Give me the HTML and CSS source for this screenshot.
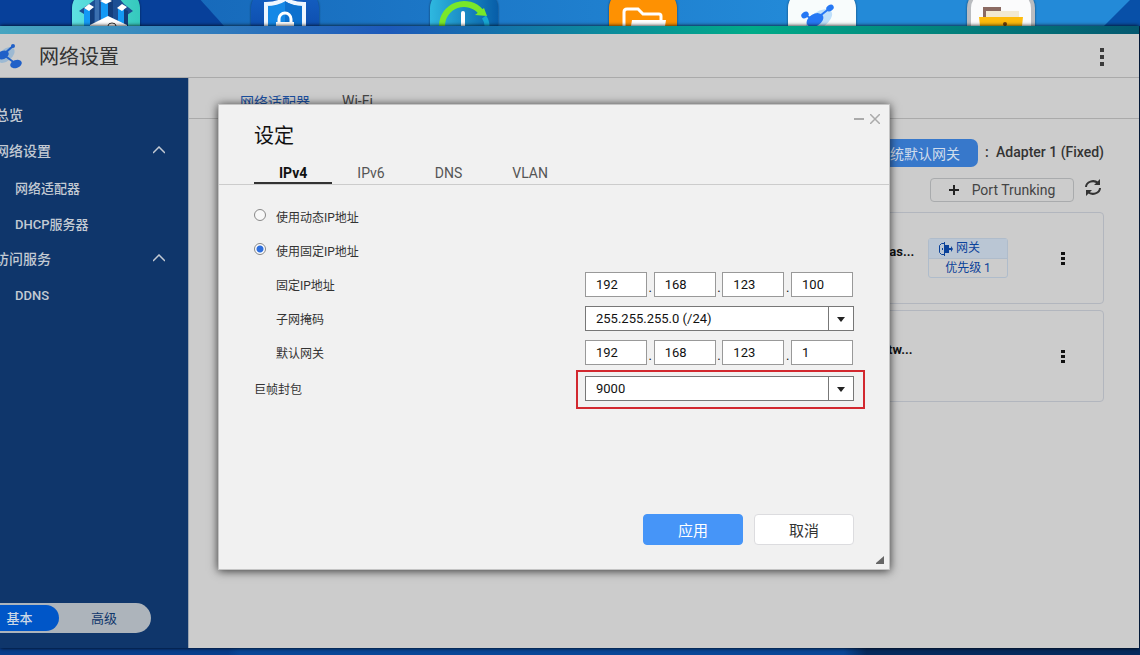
FILE: index.html
```html
<!DOCTYPE html>
<html lang="zh-CN">
<head>
    <meta charset="UTF-8">
    <meta name="viewport" content="width=device-width, initial-scale=1.0">
    <title>网络设置</title>
    <link rel="stylesheet" href="styles.css">
</head>
<body>

    <!-- 桌面图标 -->
    <div class="desktop-icons">
        <svg class="app-icon" viewBox="0 0 68 26">
            <defs>
                <linearGradient id="teal" x1="0" x2="1"><stop offset="0" stop-color="#5fe0e2"/><stop offset="1" stop-color="#35c9bd"/></linearGradient>
            </defs>
            <rect y="-9" width="68" height="68" rx="17" fill="url(#teal)"/>
            <path d="M7 11l10-7 8-6h22l5 6 9 7-6 4v11H12V14z" fill="#1c4f94"/>
            <path d="M12 9h6v17h-6zM29 2h7v18h-7zM46 9h6v17h-6z" fill="#1499f5"/>
            <path d="M18 9l4-2v19h-4zM36 2l5-2v22h-5zM52 9l4 2v15h-4z" fill="#123d7c"/>
            <path d="M23 0h4v22h-4z" fill="#3a6fb0"/>
            <path d="M12 8l5-4 5 3-5 4zM28 1l6-3 6 3-6 3zM45 8l5-4 5 3-5 4z" fill="#fff"/>
            <path d="M18 26v-1l18-9 19 9v1z" fill="#fff"/>
            <path d="M36 26a4 3 0 0 1 8 0" fill="none" stroke="#333" stroke-width="1"/>
        </svg>
        <svg class="app-icon" viewBox="0 0 68 26">
            <defs>
                <linearGradient id="navy" x2="0" y2="1"><stop offset="0" stop-color="#1560c4"/><stop offset="1" stop-color="#07409c"/></linearGradient>
            </defs>
            <rect y="-9" width="68" height="68" rx="17" fill="url(#navy)"/>
            <path d="M15 28V4q11 0 19-5 8 5 19 5v24z" fill="#1488e6" stroke="#eef6ff" stroke-width="4"/>
            <path d="M34 1v25h17V6q-10 0-17-5z" fill="#0c70ce"/>
            <path d="M28 24v-5a6 6 0 0 1 12 0v5" fill="none" stroke="#fff" stroke-width="3"/>
            <path d="M25 22h18v4H25z" fill="#fff"/>
        </svg>
        <svg class="app-icon" viewBox="0 0 68 26">
            <defs>
                <linearGradient id="clock"><stop offset="0" stop-color="#2eb8e0"/><stop offset="1" stop-color="#075da8"/></linearGradient>
            </defs>
            <rect y="-9" width="68" height="68" rx="17" fill="url(#clock)"/>
            <path d="M12 26a22 22 0 0 1 39-14" fill="none" stroke="#79e82a" stroke-width="6"/>
            <path d="M54 8l3 8-12-1z" fill="#79e82a"/>
            <path d="M54 17q3 4 3 9" fill="none" stroke="#17a7d2" stroke-width="5"/>
            <path d="M33 13v13" stroke="#fff" stroke-width="4" stroke-linecap="round"/>
        </svg>
        <svg class="app-icon" viewBox="0 0 68 26">
            <rect y="-9" width="68" height="68" rx="17" fill="#fe9102"/>
            <path d="M15 28V12q0-3 3-3h11l5 5h16q2 0 2 2v5" fill="none" stroke="#fff" stroke-width="3"/>
            <path d="M22 26l1-6h34l-1 6z" fill="#fff"/>
        </svg>
        <svg class="app-icon" viewBox="0 0 68 26">
            <rect y="-9" width="68" height="68" rx="17" fill="#f8fcfc"/>
            <ellipse cx="31" cy="20" rx="15" ry="8" fill="#bfe0fa" transform="rotate(-35 31 20)"/>
            <ellipse cx="27" cy="20" rx="9" ry="6" fill="#2678f4" transform="rotate(-30 27 20)"/>
            <path d="M28 19L42 8M26 20l-9-5" stroke="#2678f4" stroke-width="2"/>
            <ellipse cx="42" cy="8" rx="4" ry="3" fill="#2678f4" transform="rotate(-35 42 8)"/>
            <ellipse cx="17" cy="15" rx="4" ry="3" fill="#2678f4" transform="rotate(-35 17 15)"/>
        </svg>
        <svg class="app-icon" viewBox="0 0 68 26">
            <rect x="2" y="-9" width="64" height="68" rx="17" fill="#fbfbfc" stroke="#babcc0" stroke-width="4"/>
            <path d="M16 7h18v4H20v6h-4z" fill="#8b6a62"/>
            <path d="M19 11h33v7H19z" fill="#f2e9d2"/>
            <path d="M12 17h44l-1 9H13z" fill="#febb0c"/>
            <circle cx="38" cy="24" r="2" fill="#70400c"/>
        </svg>
    </div>

    <!-- 网络设置窗口 -->
    <div class="window">
        <header class="window-header">
            <svg class="logo" viewBox="0 0 24 28">
                <ellipse cx="6" cy="12" rx="10" ry="6" fill="#9db9d2" transform="rotate(-40 6 12)"/>
                <ellipse cx="3" cy="12" rx="6" ry="4" fill="#2060c8" transform="rotate(-25 3 12)"/>
                <path d="M4 11l9-8M4 12l12 9" stroke="#2060c8" stroke-width="2"/>
                <ellipse cx="13" cy="3" rx="2" ry="2" fill="#2060c8"/>
                <ellipse cx="16" cy="21" rx="6" ry="4" fill="#2060c8" transform="rotate(-20 16 21)"/>
            </svg>
            <h1>网络设置</h1>
            <button type="button" class="kebab kebab-large" aria-label="更多"><i></i><i></i><i></i></button>
        </header>

        <div class="window-body">
            <aside class="sidebar">
                <nav class="menu">
                    <a href="#" class="menu-item">总览</a>
                    <a href="#" class="menu-item">网络设置
                        <svg class="chevron" viewBox="0 0 12 8"><path d="M0 7l6-6 6 6"/></svg>
                    </a>
                    <a href="#" class="menu-item sub">网络适配器</a>
                    <a href="#" class="menu-item sub">DHCP服务器</a>
                    <a href="#" class="menu-item">访问服务
                        <svg class="chevron" viewBox="0 0 12 8"><path d="M0 7l6-6 6 6"/></svg>
                    </a>
                    <a href="#" class="menu-item sub">DDNS</a>
                </nav>
                <div class="mode-switch">
                    <button type="button" class="active">基本</button>
                    <button type="button">高级</button>
                </div>
            </aside>

            <main class="content">
                <nav class="page-tabs">
                    <a href="#" class="active">网络适配器</a>
                    <a href="#">Wi-Fi</a>
                </nav>
                <div class="gateway-row">
                    <button type="button" class="gateway-btn">系统默认网关</button>
                    <span class="colon">:</span>
                    <strong>Adapter 1 (Fixed)</strong>
                </div>
                <div class="toolbar">
                    <button type="button" class="trunk-btn">
                        <svg viewBox="0 0 10 10"><path d="M5 0v10M0 5h10"/></svg>
                        Port Trunking
                    </button>
                    <button type="button" class="refresh-btn" aria-label="刷新">
                        <svg viewBox="0 0 16 18">
                            <path d="M1 8a7 6 0 0 1 12-4M15 9a7 6 0 0 1-12 4" fill="none" stroke="#333" stroke-width="2"/>
                            <path d="M15 0v6H9zM1 17v-6h6z" fill="#333"/>
                        </svg>
                    </button>
                </div>
                <div class="adapters">
                    <section class="adapter">
                        <span class="adapter-name">Bas...</span>
                        <div class="badge">
                            <div class="badge-top">
                                <svg viewBox="0 0 14 14">
                                    <path d="M5.500 1.500H2.500l-2 2v7l2 2h3" fill="none" stroke="#0b429a" stroke-width="1"/>
                                    <path d="M5 0l1 0v14H5zM6 3h4v8H6z" fill="#0b429a"/>
                                    <path d="M3 6h1v2H3z" fill="#0b429a"/>
                                    <path d="M9 6h3V4l2 3-2 3V8H9z" fill="#0b429a"/>
                                </svg>
                                网关
                            </div>
                            <div class="badge-bottom">优先级 1</div>
                        </div>
                        <button type="button" class="kebab" aria-label="更多"><i></i><i></i><i></i></button>
                    </section>
                    <section class="adapter">
                        <span class="adapter-name">etw...</span>
                        <button type="button" class="kebab" aria-label="更多"><i></i><i></i><i></i></button>
                    </section>
                </div>
            </main>
        </div>

        <!-- 设定对话框 -->
        <form class="dialog">
            <div class="dialog-controls">
                <button type="button" aria-label="最小化"><svg viewBox="0 0 10 10"><path d="M0 5h10" stroke-width="2"/></svg></button>
                <button type="button" aria-label="关闭"><svg viewBox="0 0 10 10"><path d="M0 0l10 10M10 0L0 10"/></svg></button>
            </div>
            <h2>设定</h2>
            <nav class="dialog-tabs">
                <a href="#" class="active">IPv4</a>
                <a href="#">IPv6</a>
                <a href="#">DNS</a>
                <a href="#">VLAN</a>
            </nav>

            <div class="fields">
                <label class="row radio-row"><input type="radio" name="mode">使用动态IP地址</label>
                <label class="row radio-row"><input type="radio" name="mode" checked>使用固定IP地址</label>
                <div class="row indent">
                    <label for="ip1">固定IP地址</label>
                    <div class="ip-group">
                        <input type="text" id="ip1" value="192"><span>.</span>
                        <input type="text" value="168" aria-label="固定IP 2"><span>.</span>
                        <input type="text" value="123" aria-label="固定IP 3"><span>.</span>
                        <input type="text" value="100" aria-label="固定IP 4">
                    </div>
                </div>
                <div class="row indent">
                    <label for="mask">子网掩码</label>
                    <div class="select-box">
                        <select id="mask"><option>255.255.255.0 (/24)</option></select>
                    </div>
                </div>
                <div class="row indent">
                    <label for="gw1">默认网关</label>
                    <div class="ip-group">
                        <input type="text" id="gw1" value="192"><span>.</span>
                        <input type="text" value="168" aria-label="网关 2"><span>.</span>
                        <input type="text" value="123" aria-label="网关 3"><span>.</span>
                        <input type="text" value="1" aria-label="网关 4">
                    </div>
                </div>
                <div class="row jumbo-row">
                    <label for="jumbo">巨帧封包</label>
                    <div class="select-box highlight">
                        <select id="jumbo"><option>9000</option></select>
                    </div>
                </div>
            </div>

            <div class="dialog-footer">
                <button type="submit" class="btn primary">应用</button>
                <button type="button" class="btn">取消</button>
            </div>
            <svg class="resize-grip" viewBox="0 0 8 8"><path d="M8 0v8H0V7z"/></svg>
        </form>
    </div>

</body>
</html>
```
FILE: styles.css
```css
* {
    margin: 0;
    padding: 0;
    box-sizing: border-box;
}

body {
    height: 100vh;
    display: flex;
    flex-direction: column;
    overflow: hidden;
    background: linear-gradient(90deg, #083d8c 0, #083d8c 20%, #0a4798 21%, #0a4798 74%, #062a5e 76%, #062a5e 100%);
    font-family: Roboto, "Noto Sans CJK SC", sans-serif;
    font-size: 13px;
}

button,
input,
select {
    font: inherit;
    color: inherit;
    border: none;
    background: none;
}

button {
    cursor: pointer;
}

a {
    color: inherit;
    text-decoration: none;
}

svg {
    display: block;
    flex: none;
}

/* 桌面 */
.desktop-icons {
    height: 26px;
    flex: none;
    display: flex;
    gap: 111px;
    padding-left: 72px;
    overflow: hidden;
    background:
        linear-gradient(135deg, transparent calc(100% - 26px), #0850a8 calc(100% - 25px)) right / 36px 100% no-repeat,
        linear-gradient(48deg, #07409a 166px, transparent 167px),
        linear-gradient(90deg, #176abb 200px, #238ad8 800px);
}

.app-icon {
    width: 68px;
    height: 26px;
    filter: drop-shadow(0 0 1px rgba(0, 0, 0, 0.5));
}

/* 窗口 */
.window {
    position: relative;
    flex: 1;
    min-height: 0;
    display: flex;
    flex-direction: column;
    margin: 0 1px 7px 0;
    background: #ccc;
    box-shadow: 0 0 4px #000;
}

.window::before {
    content: "";
    height: 8px;
    flex: none;
    background: linear-gradient(90deg, #47a5c0 0, #1d59ba 34%, #00ab88 66%, #045870 100%);
}

.window-header {
    height: 44px;
    flex: none;
    display: flex;
    align-items: center;
    padding: 2px 34px 0 0;
    border-bottom: 1px solid #aaa;
}

.logo {
    width: 24px;
    height: 28px;
    margin-right: 15px;
}

h1 {
    flex: 1;
    font-size: 20px;
    line-height: 28px;
    font-weight: 400;
    color: #333;
}

.kebab {
    width: 4px;
    display: flex;
    flex-direction: column;
    align-items: center;
    gap: 2px;
}

.kebab i {
    width: 4px;
    height: 3px;
    background: #111;
}

.kebab-large {
    width: 6px;
    gap: 3px;
}

.kebab-large i {
    height: 4px;
    background: #3a3a3a;
}

.window-body {
    flex: 1;
    min-height: 0;
    display: flex;
}

/* 侧边栏 */
.sidebar {
    width: 189px;
    flex: none;
    display: flex;
    flex-direction: column;
    justify-content: space-between;
    padding: 19px 0 15px;
    overflow: hidden;
    background: #0f366b;
    border-right: 1px solid #9aa4b0;
    color: #c3cad3;
}

.menu {
    margin-left: -5px;
    padding-right: 23px;
}

.menu-item {
    height: 36px;
    display: flex;
    align-items: center;
    justify-content: space-between;
    padding-bottom: 2px;
    font-size: 14px;
    font-weight: 500;
}

.menu-item.sub {
    padding: 0 0 0 20px;
    font-size: 13px;
}

.chevron {
    width: 12px;
    height: 8px;
    fill: none;
    stroke: #c3cad3;
    stroke-width: 1.5;
}

.mode-switch {
    width: 173px;
    height: 30px;
    display: flex;
    margin-left: -22px;
    padding: 2px;
    border-radius: 15px;
    background: #adb4bb;
}

.mode-switch button {
    flex: 1;
    padding-bottom: 2px;
    border-radius: 13px;
    color: #0f366b;
}

.mode-switch .active {
    flex: none;
    width: 79px;
    background: #0056c8;
    color: #cdd8e6;
    font-weight: 500;
}

/* 主内容 */
.content {
    flex: 1;
    min-width: 0;
}

.page-tabs {
    height: 41px;
    display: flex;
    gap: 32px;
    align-items: center;
    padding: 6px 51px 0;
    border-bottom: 1px solid #aaa;
    font-size: 14px;
    color: #444;
}

.page-tabs .active {
    color: #1b4f9f;
}

.gateway-row {
    display: flex;
    align-items: center;
    justify-content: flex-end;
    margin: 20px 35px 0;
    color: #333;
    font-size: 14px;
}

.gateway-row strong,
.colon {
    padding-bottom: 2px;
    font-weight: 500;
}

.gateway-btn {
    height: 28px;
    padding: 0 18px;
    border-radius: 7px;
    background: #3778cb;
    color: #d0dcec;
}

.colon {
    width: 18px;
    padding-left: 7px;
}

.toolbar {
    display: flex;
    align-items: center;
    justify-content: flex-end;
    gap: 11px;
    margin: 11px 38px 0;
}

.trunk-btn {
    width: 144px;
    height: 24px;
    display: flex;
    align-items: center;
    justify-content: center;
    gap: 13px;
    border: 1px solid #a9abad;
    border-radius: 4px;
    color: #444;
    font-size: 14px;
}

.trunk-btn svg {
    width: 10px;
    height: 10px;
    stroke: #222;
    stroke-width: 2;
}

.refresh-btn {
    padding-bottom: 4px;
}

.refresh-btn svg {
    width: 16px;
    height: 18px;
}

.adapters {
    display: flex;
    flex-direction: column;
    gap: 6px;
    margin: 10px 35px 0;
}

.adapter {
    height: 92px;
    display: grid;
    grid-template-columns: 47px 133px 4px;
    justify-content: end;
    align-items: center;
    padding-right: 38px;
    border: 1px solid #b2b6be;
    border-radius: 4px;
}

.adapter-name {
    padding-bottom: 14px;
    color: #111;
    font-weight: 700;
}

.adapter .kebab {
    grid-column: 3;
}

.badge {
    width: 80px;
    height: 40px;
    border: 1px solid #afbccb;
    border-radius: 3px;
    color: #0b429a;
    font-size: 12px;
    line-height: 19px;
    text-align: center;
}

.badge-top {
    height: 20px;
    display: flex;
    align-items: center;
    gap: 3px;
    padding-left: 10px;
    background: #bac6d4;
    border-bottom: 1px solid #afbccb;
}

.badge-top svg {
    width: 14px;
    height: 14px;
}

/* 对话框 */
.dialog {
    position: absolute;
    left: 218px;
    top: 78px;
    width: 672px;
    height: 466px;
    display: flex;
    flex-direction: column;
    border: 1px solid #c4c4c4;
    background: #f1f1f1;
    box-shadow: 0 1px 9px rgba(0, 0, 0, 0.75);
    color: #333;
}

.dialog-controls {
    position: absolute;
    top: 9px;
    right: 9px;
    display: flex;
    gap: 6px;
}

.dialog-controls svg {
    width: 10px;
    height: 10px;
    fill: none;
    stroke: #aaa;
    stroke-width: 1.5;
}

h2 {
    margin: 17px 35px 0;
    font-size: 20px;
    line-height: 28px;
    font-weight: 400;
    color: #111;
}

.dialog-tabs {
    display: flex;
    margin-top: 15px;
    padding-left: 35px;
    border-bottom: 1px solid #ccc;
    font-size: 14px;
    line-height: 17px;
    color: #555;
}

.dialog-tabs a {
    padding: 0 25px;
    border-bottom: 2px solid transparent;
}

.dialog-tabs .active {
    border-color: #333;
    color: #111;
    font-weight: 700;
}

.fields {
    flex: 1;
    padding: 14px 35px 0;
    font-size: 12px;
}

.row {
    height: 34px;
    display: flex;
    align-items: center;
    justify-content: space-between;
}

.jumbo-row {
    margin-top: 2px;
}

.radio-row {
    justify-content: flex-start;
    gap: 10px;
}

.radio-row input {
    appearance: none;
    width: 12px;
    height: 12px;
    margin-bottom: 2px;
    border: 1px solid #888;
    border-radius: 50%;
    background: #f8f8f8;
}

.radio-row input:checked {
    background: radial-gradient(circle, #2f6fdc 0, #2f6fdc 3px, #fff 4px);
}

.indent {
    padding-left: 22px;
}

.ip-group,
.select-box {
    position: relative;
    width: 269px;
    height: 25px;
    display: flex;
    font-size: 13px;
    color: #111;
}

.ip-group {
    align-items: flex-end;
    padding-right: 1px;
}

.ip-group input {
    width: 62px;
    height: 25px;
    padding: 1px 9px 0 10px;
    border: 1px solid #999;
    background: #fff;
}

.ip-group span {
    flex: 1;
    text-align: center;
    line-height: 18px;
}

.select-box select {
    appearance: none;
    width: 100%;
    padding: 0 35px 0 10px;
    border: 1px solid #777;
    background: linear-gradient(#777, #777) right 24px top / 1px 100% no-repeat #fff;
    font-size: 13px;
}

.select-box::after {
    content: "";
    position: absolute;
    right: 9px;
    top: 11px;
    border: 4px solid transparent;
    border-top: 5px solid #222;
    border-bottom: none;
    pointer-events: none;
}

.highlight::before {
    content: "";
    position: absolute;
    inset: -6px -11px -8px -9px;
    border: 2px solid #d2282f;
    pointer-events: none;
}

.dialog-footer {
    display: flex;
    justify-content: flex-end;
    gap: 11px;
    padding: 0 35px 24px;
}

.btn {
    width: 100px;
    height: 31px;
    border: 1px solid #dcdcdf;
    border-radius: 4px;
    background: #fff;
    font-size: 15px;
}

.btn.primary {
    border-color: #4695f8;
    background: #4695f8;
    color: #fff;
}

.resize-grip {
    position: absolute;
    right: 5px;
    bottom: 5px;
    width: 8px;
    height: 8px;
    fill: #666;
}
```
